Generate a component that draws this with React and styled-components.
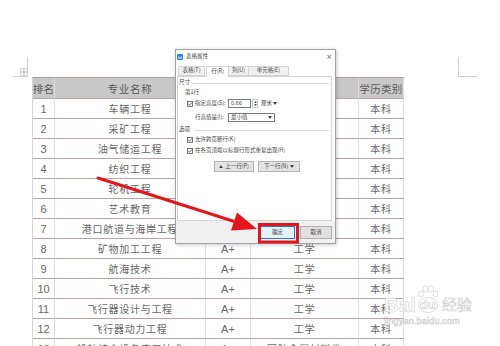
import React from "react";
import styled, { createGlobalStyle } from "styled-components";

const Global = createGlobalStyle`
  html, body { margin: 0; padding: 0; background: #fff; }
  body { font-family: "Liberation Sans", "Noto Sans CJK SC", sans-serif; }
`;

const Page = styled.div`
  position: relative;
  width: 500px;
  height: 346px;
  overflow: hidden;
  background: #fff;
`;

const Marks = styled.div`
  display: flex;
  justify-content: space-between;
  padding: 57px 23px 0 13px;
`;

const CornerMark = styled.div`
  box-sizing: border-box;
  width: ${(p) => p.$w}px;
  height: 20px;
  border-bottom: 1px solid #cfcfcf;
  ${(p) => (p.$side === "left" ? "border-right: 1px solid #cfcfcf;" : "border-left: 1px solid #cfcfcf;")}
`;

const TableWrap = styled.div`
  position: relative;
  margin-left: 32px;
  width: max-content;
`;

const MoveHandle = styled.div`
  position: absolute;
  left: -12px;
  top: -9px;
  width: 8px;
  height: 8px;
  display: flex;
`;

const Grid = styled.div`
  display: grid;
  grid-template-columns: 22px 151px 45px 108px 45px;
  grid-template-rows: 21px;
  grid-auto-rows: 20px;
  border-left: 1px solid #d6d6d6;
  border-top: 1px solid #b39c9c;
`;

const Cell = styled.div`
  box-sizing: border-box;
  display: flex;
  align-items: center;
  justify-content: center;
  border-right: 1px solid #dedede;
  border-bottom: 1px solid #b9a3a3;
  background: ${(p) => (p.$head ? "#c9c9c9" : "#fff")};
  color: ${(p) => (p.$head ? "#5a5a5a" : "#686868")};
  font-family: "Liberation Sans", "Noto Sans CJK SC", sans-serif;
  font-size: ${(p) => (p.$num ? "11px" : p.$head ? "10.5px" : "10px")};
  letter-spacing: ${(p) => (p.$num ? "0" : p.$tight ? "0.2px" : "0.7px")};
  white-space: nowrap;
  overflow: visible;
`;

/* ---------- dialog ---------- */
const Dialog = styled.div`
  position: absolute;
  left: 175px;
  top: 49px;
  z-index: 2;
  width: 161px;
  height: 195px;
  box-sizing: border-box;
  border: 1px solid #a3a3a3;
  background: #fff;
  box-shadow: 1px 1px 4px rgba(0, 0, 0, 0.22);
  display: flex;
  flex-direction: column;
  font-family: "Noto Sans CJK SC", sans-serif;
  font-size: 5.5px;
  line-height: 1;
  color: #444;
`;

const TitleBar = styled.div`
  height: 14px;
  display: flex;
  align-items: center;
  padding: 0 3px 0 1px;
`;

const AppIcon = styled.div`
  width: 6px;
  height: 6px;
  background: #2f7fe0;
  border-radius: 1px;
  display: flex;
  align-items: center;
  justify-content: center;
`;

const Title = styled.span`
  margin-left: 3px;
  font-size: 5.5px;
`;

const Close = styled.span`
  margin-left: auto;
  font-family: "DejaVu Sans", sans-serif;
  font-size: 7px;
  color: #555;
`;

const TabBar = styled.div`
  height: 12px;
  display: flex;
  align-items: flex-end;
  padding-left: 3px;
`;

const Tab = styled.div`
  box-sizing: border-box;
  width: ${(p) => p.$w}px;
  height: ${(p) => (p.$active ? 11 : 10)}px;
  display: flex;
  align-items: center;
  justify-content: center;
  border: 1px solid #d4d4d4;
  border-bottom: ${(p) => (p.$active ? "none" : "1px solid #d4d4d4")};
  margin-left: ${(p) => (p.$active ? "1px" : "-1px")};
  margin-bottom: ${(p) => (p.$active ? "-1px" : "0")};
  background: ${(p) => (p.$active ? "#fff" : "#f0f0f0")};
  position: relative;
  z-index: ${(p) => (p.$active ? 1 : 0)};
`;

const Panel = styled.div`
  box-sizing: border-box;
  margin: 0 3px 0 1px;
  height: 145px;
  border: 1px solid #d4d4d4;
  background: #fff;
  display: flex;
  flex-direction: column;
`;

const Row = styled.div`
  display: flex;
  align-items: center;
  height: ${(p) => p.$h || 8}px;
  margin-top: ${(p) => p.$mt || 0}px;
  padding-left: ${(p) => p.$pl || 0}px;
  gap: ${(p) => p.$gap || 0}px;
`;

const LegendLine = styled.div`
  flex: 1;
  height: 0;
  border-top: 1px solid #d8d8d8;
  margin: 0 2px 0 ${(p) => p.$ml || 3}px;
`;

const Label = styled.span`
  width: ${(p) => (p.$w ? `${p.$w}px` : "auto")};
  margin-left: ${(p) => p.$ml || 0}px;
  white-space: nowrap;
`;

const Input = styled.div`
  box-sizing: border-box;
  width: ${(p) => p.$w}px;
  height: 9px;
  border: 1px solid #7d7d7d;
  display: flex;
  align-items: center;
  padding: 0 2px;
  font-family: "Liberation Sans", "Noto Sans CJK SC", sans-serif;
  background: #fff;
`;

const Caret = styled.span`
  margin-left: auto;
  display: flex;
`;

const Spinner = styled.div`
  box-sizing: border-box;
  width: 6px;
  height: 9px;
  margin-left: 1px;
  border: 1px solid #c9c9c9;
  display: flex;
  flex-direction: column;
  align-items: center;
  justify-content: space-around;
`;

const Unit = styled.span`
  margin-left: 3px;
  display: flex;
  align-items: center;
  gap: 1px;
`;

const NavButton = styled.div`
  box-sizing: border-box;
  width: ${(p) => p.$w}px;
  height: 11px;
  border: 1px solid #b4b4b4;
  background: #e3e3e3;
  display: flex;
  align-items: center;
  justify-content: center;
  gap: 2px;
`;

const Footer = styled.div`
  flex: 1;
  background: #f0f0f0;
  display: flex;
  justify-content: flex-end;
  align-items: flex-start;
  padding: 5px 3px 0 0;
  gap: 5px;
`;

const FootButton = styled.div`
  box-sizing: border-box;
  width: ${(p) => p.$w}px;
  height: 13px;
  display: flex;
  align-items: center;
  justify-content: center;
  border: 1px solid ${(p) => (p.$primary ? "#2a7ad6" : "#b0b0b0")};
  background: ${(p) => (p.$primary ? "#e5f1fb" : "#e1e1e1")};
`;

/* ---------- overlays ---------- */
const Annotation = styled.svg`
  position: absolute;
  left: 0;
  top: 0;
  z-index: 3;
  pointer-events: none;
`;

const Watermark = styled.div`
  position: absolute;
  left: 384px;
  top: 285px;
  z-index: 4;
  display: flex;
  flex-direction: column;
  align-items: flex-start;
  pointer-events: none;
  font-family: "Liberation Sans", "Noto Sans CJK SC", sans-serif;
  color: rgba(255, 255, 255, 0.85);
  -webkit-text-stroke: 0.6px #d0d0d0;
`;

const MarkRow = styled.div`
  display: flex;
  align-items: flex-end;
`;

const Bai = styled.span`
  font-size: 20px;
  font-weight: bold;
  line-height: 20px;
  letter-spacing: 0.5px;
`;

const Paw = styled.div`
  position: relative;
  width: 22px;
  height: 30px;
  display: flex;
  align-items: flex-end;
  justify-content: center;
`;

const PawToes = styled.svg`
  position: absolute;
  left: 0;
  top: 0;
`;

const Du = styled.span`
  position: relative;
  font-size: 13px;
  font-weight: bold;
  line-height: 16px;
  margin-bottom: 2px;
`;

const Jingyan = styled.span`
  font-size: 15px;
  line-height: 18px;
  margin-left: 3px;
  margin-bottom: 1px;
`;

const Domain = styled.span`
  font-size: 9px;
  line-height: 11px;
  margin-top: 1px;
  letter-spacing: 0.2px;
`;

const Check = () => (
  <svg width="6" height="6" viewBox="0 0 6 6">
    <rect x="0.5" y="0.5" width="5" height="5" fill="#fff" stroke="#555" strokeWidth="0.8" />
    <polyline points="1.3,3 2.5,4.2 4.7,1.6" fill="none" stroke="#333" strokeWidth="0.8" />
  </svg>
);

const TriDown = () => (
  <svg width="4" height="3" viewBox="0 0 4 3">
    <polygon points="0,0 4,0 2,3" fill="#444" />
  </svg>
);

const TriUp = () => (
  <svg width="4" height="3" viewBox="0 0 4 3">
    <polygon points="0,3 4,3 2,0" fill="#444" />
  </svg>
);

/* rows 1-7: the middle columns sit under the dialog and show nothing */
const rows = [
  ["1", "车辆工程", "", "", "本科"],
  ["2", "采矿工程", "", "", "本科"],
  ["3", "油气储运工程", "", "", "本科"],
  ["4", "纺织工程", "", "", "本科"],
  ["5", "轮机工程", "", "", "本科"],
  ["6", "艺术教育", "", "", "本科"],
  ["7", "港口航道与海岸工程", "", "", "本科"],
  ["8", "矿物加工工程", "A+", "工学", "本科"],
  ["9", "航海技术", "A+", "工学", "本科"],
  ["10", "飞行技术", "A+", "工学", "本科"],
  ["11", "飞行器设计与工程", "A+", "工学", "本科"],
  ["12", "飞行器动力工程", "A+", "工学", "本科"],
  ["13", "船舶综合设备应用技术", "A+", "国防金属材料类", "本科"],
];

export default function App() {
  return (
    <Page>
      <Global />
      <Marks>
        <CornerMark $side="left" $w={15} />
        <CornerMark $side="right" $w={19} />
      </Marks>

      <TableWrap>
        <MoveHandle>
          <svg width="8" height="8" viewBox="0 0 8 8">
            <rect x="0.5" y="0.5" width="7" height="7" fill="#fff" stroke="#c4c4c4" strokeWidth="0.6" />
            <path d="M4 1.3V6.7M1.3 4H6.7M3.2 2.1L4 1.3 4.8 2.1M3.2 5.9L4 6.7 4.8 5.9M2.1 3.2L1.3 4 2.1 4.8M5.9 3.2L6.7 4 5.9 4.8" fill="none" stroke="#8a8a8a" strokeWidth="0.5" />
          </svg>
        </MoveHandle>
        <Grid>
          <Cell $head $tight>排名</Cell>
          <Cell $head>专业名称</Cell>
          <Cell $head />
          <Cell $head />
          <Cell $head $tight>学历类别</Cell>
          {rows.map((r) => (
            <React.Fragment key={r[0]}>
              <Cell $num>{r[0]}</Cell>
              <Cell>{r[1]}</Cell>
              <Cell $num>{r[2]}</Cell>
              <Cell>{r[3]}</Cell>
              <Cell>{r[4]}</Cell>
            </React.Fragment>
          ))}
        </Grid>
      </TableWrap>

      <Dialog>
        <TitleBar>
          <AppIcon>
            <svg width="4" height="3" viewBox="0 0 4 3">
              <polyline points="0.2,0.2 1,2.8 2,1 3,2.8 3.8,0.2" fill="none" stroke="#fff" strokeWidth="0.6" />
            </svg>
          </AppIcon>
          <Title>表格属性</Title>
          <Close>×</Close>
        </TitleBar>
        <TabBar>
          <Tab $w={27}>表格(T)</Tab>
          <Tab $w={23} $active>行(R)</Tab>
          <Tab $w={21}>列(U)</Tab>
          <Tab $w={41}>单元格(E)</Tab>
        </TabBar>
        <Panel>
          <Row $mt={2} $pl={1}>
            <Label>尺寸</Label>
            <LegendLine $ml={2} />
          </Row>
          <Row $mt={2} $pl={7}>
            <Label>第1行</Label>
          </Row>
          <Row $mt={2} $h={9} $pl={9}>
            <Check />
            <Label $w={33} $ml={2}>指定高度(S):</Label>
            <Input $w={23}>0.66</Input>
            <Spinner>
              <svg width="3" height="2" viewBox="0 0 3 2"><polygon points="0,2 3,2 1.5,0" fill="#555" /></svg>
              <svg width="3" height="2" viewBox="0 0 3 2"><polygon points="0,0 3,0 1.5,2" fill="#555" /></svg>
            </Spinner>
            <Unit>厘米<TriDown /></Unit>
          </Row>
          <Row $mt={5} $h={9} $pl={17}>
            <Label $w={33}>行高值是(I):</Label>
            <Input $w={47}>
              最小值
              <Caret><TriDown /></Caret>
            </Input>
          </Row>
          <Row $mt={4} $pl={1}>
            <Label>选项</Label>
            <LegendLine $ml={5} />
          </Row>
          <Row $mt={2} $pl={9} $gap={2}>
            <Check />
            <Label>允许跨页断行(K)</Label>
          </Row>
          <Row $mt={3} $pl={9} $gap={2}>
            <Check />
            <Label>在各页顶端以标题行形式重复出现(H)</Label>
          </Row>
          <Row $mt={6} $h={11} $pl={36} $gap={4}>
            <NavButton $w={40}>
              <TriUp />
              上一行(P)
            </NavButton>
            <NavButton $w={42}>
              下一行(N)
              <TriDown />
            </NavButton>
          </Row>
        </Panel>
        <Footer>
          <FootButton $w={35} $primary>确定</FootButton>
          <FootButton $w={32}>取消</FootButton>
        </Footer>
      </Dialog>

      <Annotation width="500" height="346" viewBox="0 0 500 346">
        <line x1="98" y1="178" x2="236" y2="222" stroke="#e3161d" strokeWidth="3" strokeLinecap="round" />
        <polygon points="257,229 237,212.5 231,230.5" fill="#e3161d" />
        <rect x="259.5" y="224.5" width="38" height="17.5" fill="none" stroke="#e3161d" strokeWidth="3" />
      </Annotation>

      <Watermark>
        <MarkRow>
          <Bai>Bai</Bai>
          <Paw>
            <PawToes width="22" height="30" viewBox="0 0 22 30">
              <g fill="rgba(255,255,255,0.85)" stroke="#d0d0d0" strokeWidth="0.7">
                <ellipse cx="4" cy="9" rx="2.3" ry="3" />
                <ellipse cx="8.5" cy="4" rx="2.4" ry="3.2" />
                <ellipse cx="14" cy="4" rx="2.4" ry="3.2" />
                <ellipse cx="18.5" cy="9" rx="2.3" ry="3" />
                <ellipse cx="11" cy="20" rx="9.5" ry="7.5" />
              </g>
            </PawToes>
            <Du>du</Du>
          </Paw>
          <Jingyan>经验</Jingyan>
        </MarkRow>
        <Domain>jingyan.baidu.com</Domain>
      </Watermark>
    </Page>
  );
}
